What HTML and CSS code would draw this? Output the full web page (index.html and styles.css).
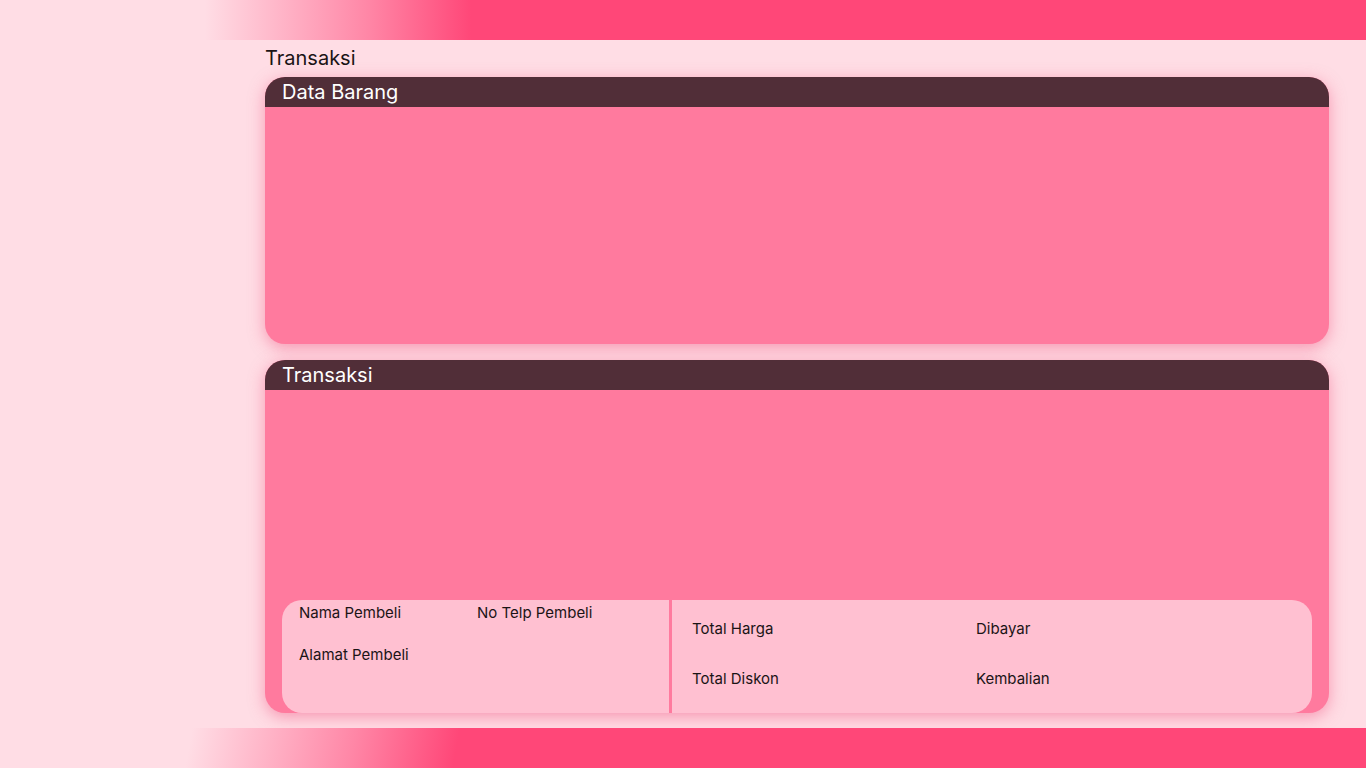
FILE: index.html
```html
<!DOCTYPE html>
<html lang="id">
<head>
<meta charset="utf-8">
<title>Transaksi</title>
<link rel="stylesheet" href="styles.css">
</head>
<body>
<div class="app">
  <header class="topbar"></header>
  <div class="middle">
    <aside class="sidebar"></aside>
    <main class="main">
      <h1 class="page-title">Transaksi</h1>
      <section class="panel panel-barang">
        <div class="panel-head">Data Barang</div>
        <div class="panel-body"></div>
      </section>
      <section class="panel panel-transaksi">
        <div class="panel-head">Transaksi</div>
        <div class="panel-body trans-body">
          <div class="summary">
            <div class="buyer">
              <div class="buyer-row">
                <span class="label">Nama Pembeli</span>
                <span class="label">No Telp Pembeli</span>
              </div>
              <div class="buyer-row buyer-row-2">
                <span class="label">Alamat Pembeli</span>
              </div>
            </div>
            <div class="totals">
              <span class="label">Total Harga</span>
              <span class="label">Dibayar</span>
              <span class="label">Total Diskon</span>
              <span class="label">Kembalian</span>
            </div>
          </div>
        </div>
      </section>
    </main>
  </div>
  <footer class="bottombar"></footer>
</div>
</body>
</html>
```

FILE: styles.css
```css
* { box-sizing: border-box; }

html, body {
  margin: 0;
  padding: 0;
  height: 100%;
}

body {
  background: #ffdde5;
  font-family: Inter, "Noto Sans", sans-serif;
  color: #1b1416;
  overflow: hidden;
}

.app {
  display: flex;
  flex-direction: column;
  width: 1366px;
  height: 768px;
}

.topbar {
  height: 40px;
  flex: none;
  background: linear-gradient(to right, #ffdde5 15%, #ff86a6 27%, #ff4778 34.5%);
}

.bottombar {
  height: 40px;
  flex: none;
  position: relative;
  z-index: 2;
  background: linear-gradient(100deg, #ffdde5 14%, #ff86a6 26%, #ff4778 33.5%);
}

.middle {
  flex: 1;
  display: flex;
  min-height: 0;
}

.sidebar {
  width: 210px;
  flex: none;
}

.main {
  flex: 1;
  padding: 0 37px 0 55px;
  display: flex;
  flex-direction: column;
}

.page-title {
  margin: 0 0 2px;
  padding-top: 1px;
  font-size: 20px;
  font-weight: 400;
  line-height: 34px;
  color: #1b1416;
}

.panel {
  border-radius: 20px;
  background: #ff7a9e;
  box-shadow: 0 4px 16px rgba(240, 80, 125, 0.5);
  display: flex;
  flex-direction: column;
}

.panel-head {
  height: 30px;
  flex: none;
  background: #512e38;
  color: #ffffff;
  font-size: 20px;
  line-height: 30px;
  padding-left: 17px;
  border-radius: 20px 20px 0 0;
}

.panel-barang {
  height: 267px;
}

.panel-transaksi {
  margin-top: 16px;
  height: 353px;
}

.panel-body {
  flex: 1;
  border-radius: 0 0 20px 20px;
}

.trans-body {
  display: flex;
  flex-direction: column;
  justify-content: flex-end;
  padding: 0 17px;
}

.summary {
  height: 113px;
  display: flex;
  gap: 3px;
}

.label {
  font-size: 15px;
  line-height: 18px;
  color: #1b1416;
}

.buyer {
  width: 387px;
  background: #ffc0d1;
  border-radius: 20px 0 0 20px;
  padding: 4px 0 0 17px;
}

.buyer-row {
  display: grid;
  grid-template-columns: 178px 1fr;
}

.buyer-row-2 {
  margin-top: 24px;
}

.totals {
  flex: 1;
  background: #ffc0d1;
  border-radius: 0 20px 20px 0;
  padding: 20px 0 0 20px;
  display: grid;
  grid-template-columns: 284px 1fr;
  grid-auto-rows: 18px;
  row-gap: 32px;
  align-content: start;
}
```
